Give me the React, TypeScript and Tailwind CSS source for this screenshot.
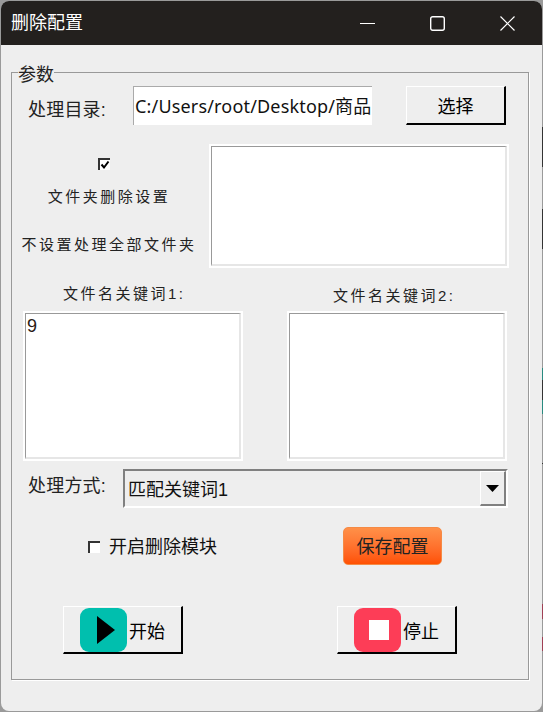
const cjk = '[font-family:"Liberation_Sans","Noto_Sans_CJK_SC",sans-serif]';

// whatever was behind the window shows through on the last pixel column
const edge = [
  'h-[127px]', 'h-[40px] bg-[#333]', 'h-[42px]', 'h-[40px] bg-[#333]', 'h-[119px]',
  'h-[12px] bg-[#2a8a80]', 'h-[20px] bg-[#333]', 'h-[14px] bg-[#2a8a80]', 'h-[49px]',
  'h-[1px] bg-[#333]', 'h-[140px]', 'h-[15px] bg-[#a04055]', 'h-[18px]', 'h-[14px] bg-[#a04055]',
];

// sunken win32 edit box
function Field({ className, children }: { className: string; children?: React.ReactNode }) {
  return (
    <div className={`bg-white p-[2px] ${className}`}>
      <div className="h-full border-t border-l border-t-[#999] border-l-[#999] border-r-2 border-b-2 border-r-[#e6e6e6] border-b-[#e6e6e6] bg-white px-[1px] text-[18px] leading-[24px] text-[#2a1a14]">
        {children}
      </div>
    </div>
  );
}

function RaisedButton({ className, children }: { className: string; children: React.ReactNode }) {
  return (
    <button className={`flex items-center border-t border-l border-t-white border-l-white border-r-2 border-b-2 border-r-black border-b-black bg-[#eeeeee] text-[18px] text-black ${className}`}>
      {children}
    </button>
  );
}

function SmallCheck({ checked }: { checked?: boolean }) {
  return (
    <span className="block h-[12px] w-[12px] border-t-2 border-l-2 border-t-[#333] border-l-[#333] bg-white">
      {checked && (
        <svg viewBox="0 0 10 10" className="h-[10px] w-[10px]">
          <path d="M1.5 4.5 L4 7.5 L8.5 1.5" fill="none" stroke="#000" strokeWidth="2" />
        </svg>
      )}
    </span>
  );
}

export default function App() {
  return (
    <div className={`flex h-[712px] w-[543px] bg-[#9a9a9a] pl-[1px] ${cjk}`}>
      <div className="my-[1px] flex w-[541px] flex-col overflow-hidden rounded-[8px] bg-[#eeeeee]">
        {/* Title bar */}
        <div className="flex h-[44px] shrink-0 items-center bg-[#23201e] pl-[10px] text-white">
          <span className="text-[18px]">删除配置</span>
          <div className="ml-auto mr-[27px] flex items-center gap-[55px]">
            <svg viewBox="0 0 15 15" className="h-[15px] w-[15px]"><path d="M0 7.5 H15" stroke="#fff" strokeWidth="1.2" /></svg>
            <svg viewBox="0 0 15 15" className="h-[15px] w-[15px]"><rect x="0.7" y="0.7" width="13.6" height="13.6" rx="2" fill="none" stroke="#fff" strokeWidth="1.4" /></svg>
            <svg viewBox="0 0 15 15" className="h-[15px] w-[15px]"><path d="M0.5 0.5 L14.5 14.5 M14.5 0.5 L0.5 14.5" stroke="#fff" strokeWidth="1.2" /></svg>
          </div>
        </div>

        {/* Group box */}
        <fieldset className="ml-[10px] mt-[13px] h-[622px] w-[518px] border border-[#999] pl-[11px] shadow-[1px_1px_0_#fff]">
          <legend className="ml-[-5px] pt-[6px] text-[18px] leading-[22px] text-[#222]">参数</legend>

          <div className="flex h-[39px] items-center">
            <span className="ml-[5px] mt-[10px] w-[105px] text-[18px] tracking-[0.2px] text-[#222]">处理目录:</span>
            <div className="h-[39px] w-[239px] overflow-hidden whitespace-nowrap border-t border-l border-t-[#aaa] border-l-[#aaa] bg-white pl-[1px] text-[18px] leading-[38px] tracking-[0.17px] text-[#111] [font-family:'Noto_Sans','Noto_Sans_CJK_SC',sans-serif]">
              C:/Users/root/Desktop/商品
            </div>
            <RaisedButton className="ml-[34px] h-[39px] w-[100px] justify-center pt-[5px]">选择</RaisedButton>
          </div>

          <div className="mt-[19px] flex h-[124px]">
            <div className="ml-[-2px] flex w-[176px] flex-col items-center text-[15px] leading-[20px] tracking-[2.5px] text-[#222]">
              <span className="ml-[-10px] mt-[14px]"><SmallCheck checked /></span>
              <span className="mt-[17px]">文件夹删除设置</span>
              <span className="mt-[28px] whitespace-nowrap">不设置处理全部文件夹</span>
            </div>
            <Field className="ml-[12px] h-[124px] w-[300px]" />
          </div>

          <div className="flex">
            <div className="w-[220px]">
              <div className="mt-[16px] pl-[40px] text-[15px] leading-[20px] tracking-[2.5px] text-[#222]">文件名关键词1:</div>
              <Field className="mt-[7px] h-[150px] w-[220px]">9</Field>
            </div>
            <div className="ml-[44px] w-[220px]">
              <div className="mt-[18px] pl-[46px] text-[15px] leading-[20px] tracking-[2.5px] text-[#222]">文件名关键词2:</div>
              <Field className="mt-[5px] h-[150px] w-[220px]" />
            </div>
          </div>

          <div className="mt-[8px] flex h-[39px]">
            <span className="ml-[5px] w-[95px] text-[18px] leading-[34px] tracking-[0.2px] text-[#222]">处理方式:</span>
            <div className="flex h-[39px] w-[385px] border-t-2 border-l-2 border-t-[#808080] border-l-[#808080] border-r-2 border-b-2 border-r-white border-b-white">
              <span className="flex-1 pl-[3px] text-[18px] leading-[38px] text-[#111]">匹配关键词1</span>
              <div className="flex w-[26px] items-center justify-center border-t border-l border-t-white border-l-white border-r-2 border-b-2 border-r-[#808080] border-b-[#808080]">
                <svg viewBox="0 0 13 7" className="h-[7px] w-[13px]"><path d="M0 0 H13 L6.5 7 Z" fill="#000" /></svg>
              </div>
            </div>
          </div>

          <div className="mt-[19px] flex h-[38px] items-center">
            <span className="ml-[65px] mt-[2px]"><SmallCheck /></span>
            <span className="ml-[9px] mt-[2px] w-[108px] whitespace-nowrap text-[18px] text-[#111]">开启删除模块</span>
            <button className="ml-[126px] h-[38px] w-[99px] rounded-[5px] border border-[#f58a45] bg-gradient-to-b from-[#ff9048] to-[#ff5000] pt-[3px] text-[18px] text-[#222]">
              保存配置
            </button>
          </div>

          <div className="mt-[41px] flex">
            <RaisedButton className="ml-[40px] h-[48px] w-[120px] pl-[16px]">
              <span className="flex h-[44px] w-[47px] items-center rounded-[9px] bg-[#00bfae] pl-[17px]">
                <svg viewBox="0 0 18 28" className="h-[28px] w-[18px]"><path d="M0 0 L18 14 L0 28 Z" fill="#000" /></svg>
              </span>
              <span className="ml-[2px] pt-[5px]">开始</span>
            </RaisedButton>
            <RaisedButton className="ml-[154px] h-[48px] w-[120px] pl-[16px]">
              <span className="flex h-[44px] w-[47px] items-center justify-center rounded-[9px] bg-[#fd3d57] pl-[2px]">
                <span className="h-[20px] w-[20px] bg-white" />
              </span>
              <span className="ml-[2px] pt-[5px]">停止</span>
            </RaisedButton>
          </div>
        </fieldset>
      </div>

      {/* last pixel column */}
      <div className="flex w-[1px] flex-col">
        {edge.map((c, i) => (
          <div key={i} className={c} />
        ))}
      </div>
    </div>
  );
}
